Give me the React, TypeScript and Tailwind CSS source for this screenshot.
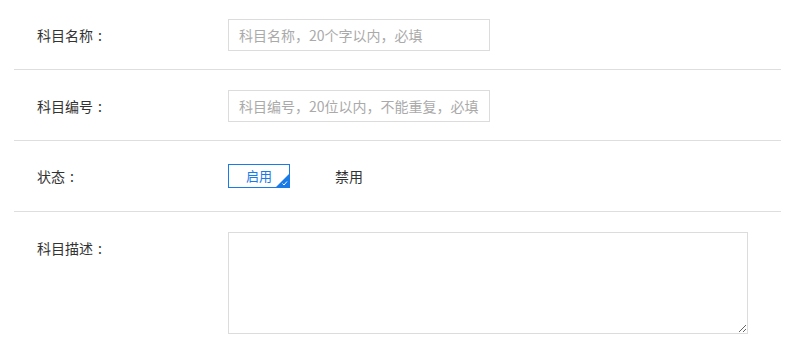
import React from "react";

const font = { fontFamily: '"Microsoft YaHei","Noto Sans CJK SC",sans-serif' };

function Row({ label, children, h, top }: { label: string; children: React.ReactNode; h?: string; top?: boolean }) {
  return (
    <div className={`flex ${top ? "items-start pt-[20px] pb-[15px]" : `items-center border-b border-[#dedede] ${h}`}`}>
      <div className="w-[214px] shrink-0 pl-[23px] text-[14px] leading-[32px] text-[#333]">
        {label}
        <span className="inline-block w-[14px] text-center">:</span>
      </div>
      <div className="flex items-center">{children}</div>
    </div>
  );
}

export default function App() {
  return (
    <div className="bg-white w-[789px] h-[349px]" style={font}>
      <div className="ml-[14px] w-[767px]">
        <Row label="科目名称" h="h-[70px]">
          <input
            className="w-[262px] h-[32px] border border-[#dcdcdc] px-[10px] text-[14px] text-[#333] placeholder:text-[#aaa] outline-none"
            style={font}
            placeholder="科目名称，20个字以内，必填"
          />
        </Row>
        <Row label="科目编号" h="h-[71px] pt-[1px]">
          <input
            className="w-[262px] h-[32px] border border-[#dcdcdc] px-[10px] text-[14px] text-[#333] placeholder:text-[#aaa] outline-none"
            style={font}
            placeholder="科目编号，20位以内，不能重复，必填"
          />
        </Row>
        <Row label="状态" h="h-[71px]">
          <div className="flex items-center">
            <div className="relative w-[62px] h-[24px] border border-[#1a7be6] flex items-center justify-center text-[13px] text-[#1a7be6] overflow-hidden">
              启用
              <svg className="absolute right-0 bottom-0" width="13" height="13" viewBox="0 0 13 13">
                <polygon points="13,0 13,13 0,13" fill="#1a7be6" />
                <polyline points="6.5,9.5 8,11 11,7.5" fill="none" stroke="#fff" strokeWidth="1" />
              </svg>
            </div>
            <div className="w-[62px] h-[24px] ml-[28px] flex items-center justify-center text-[14px] text-[#333]">禁用</div>
          </div>
        </Row>
        <Row label="科目描述" top>
          <textarea
            className="w-[520px] h-[102px] border border-[#dcdcdc] outline-none resize block"
            style={font}
          />
        </Row>
      </div>
    </div>
  );
}
